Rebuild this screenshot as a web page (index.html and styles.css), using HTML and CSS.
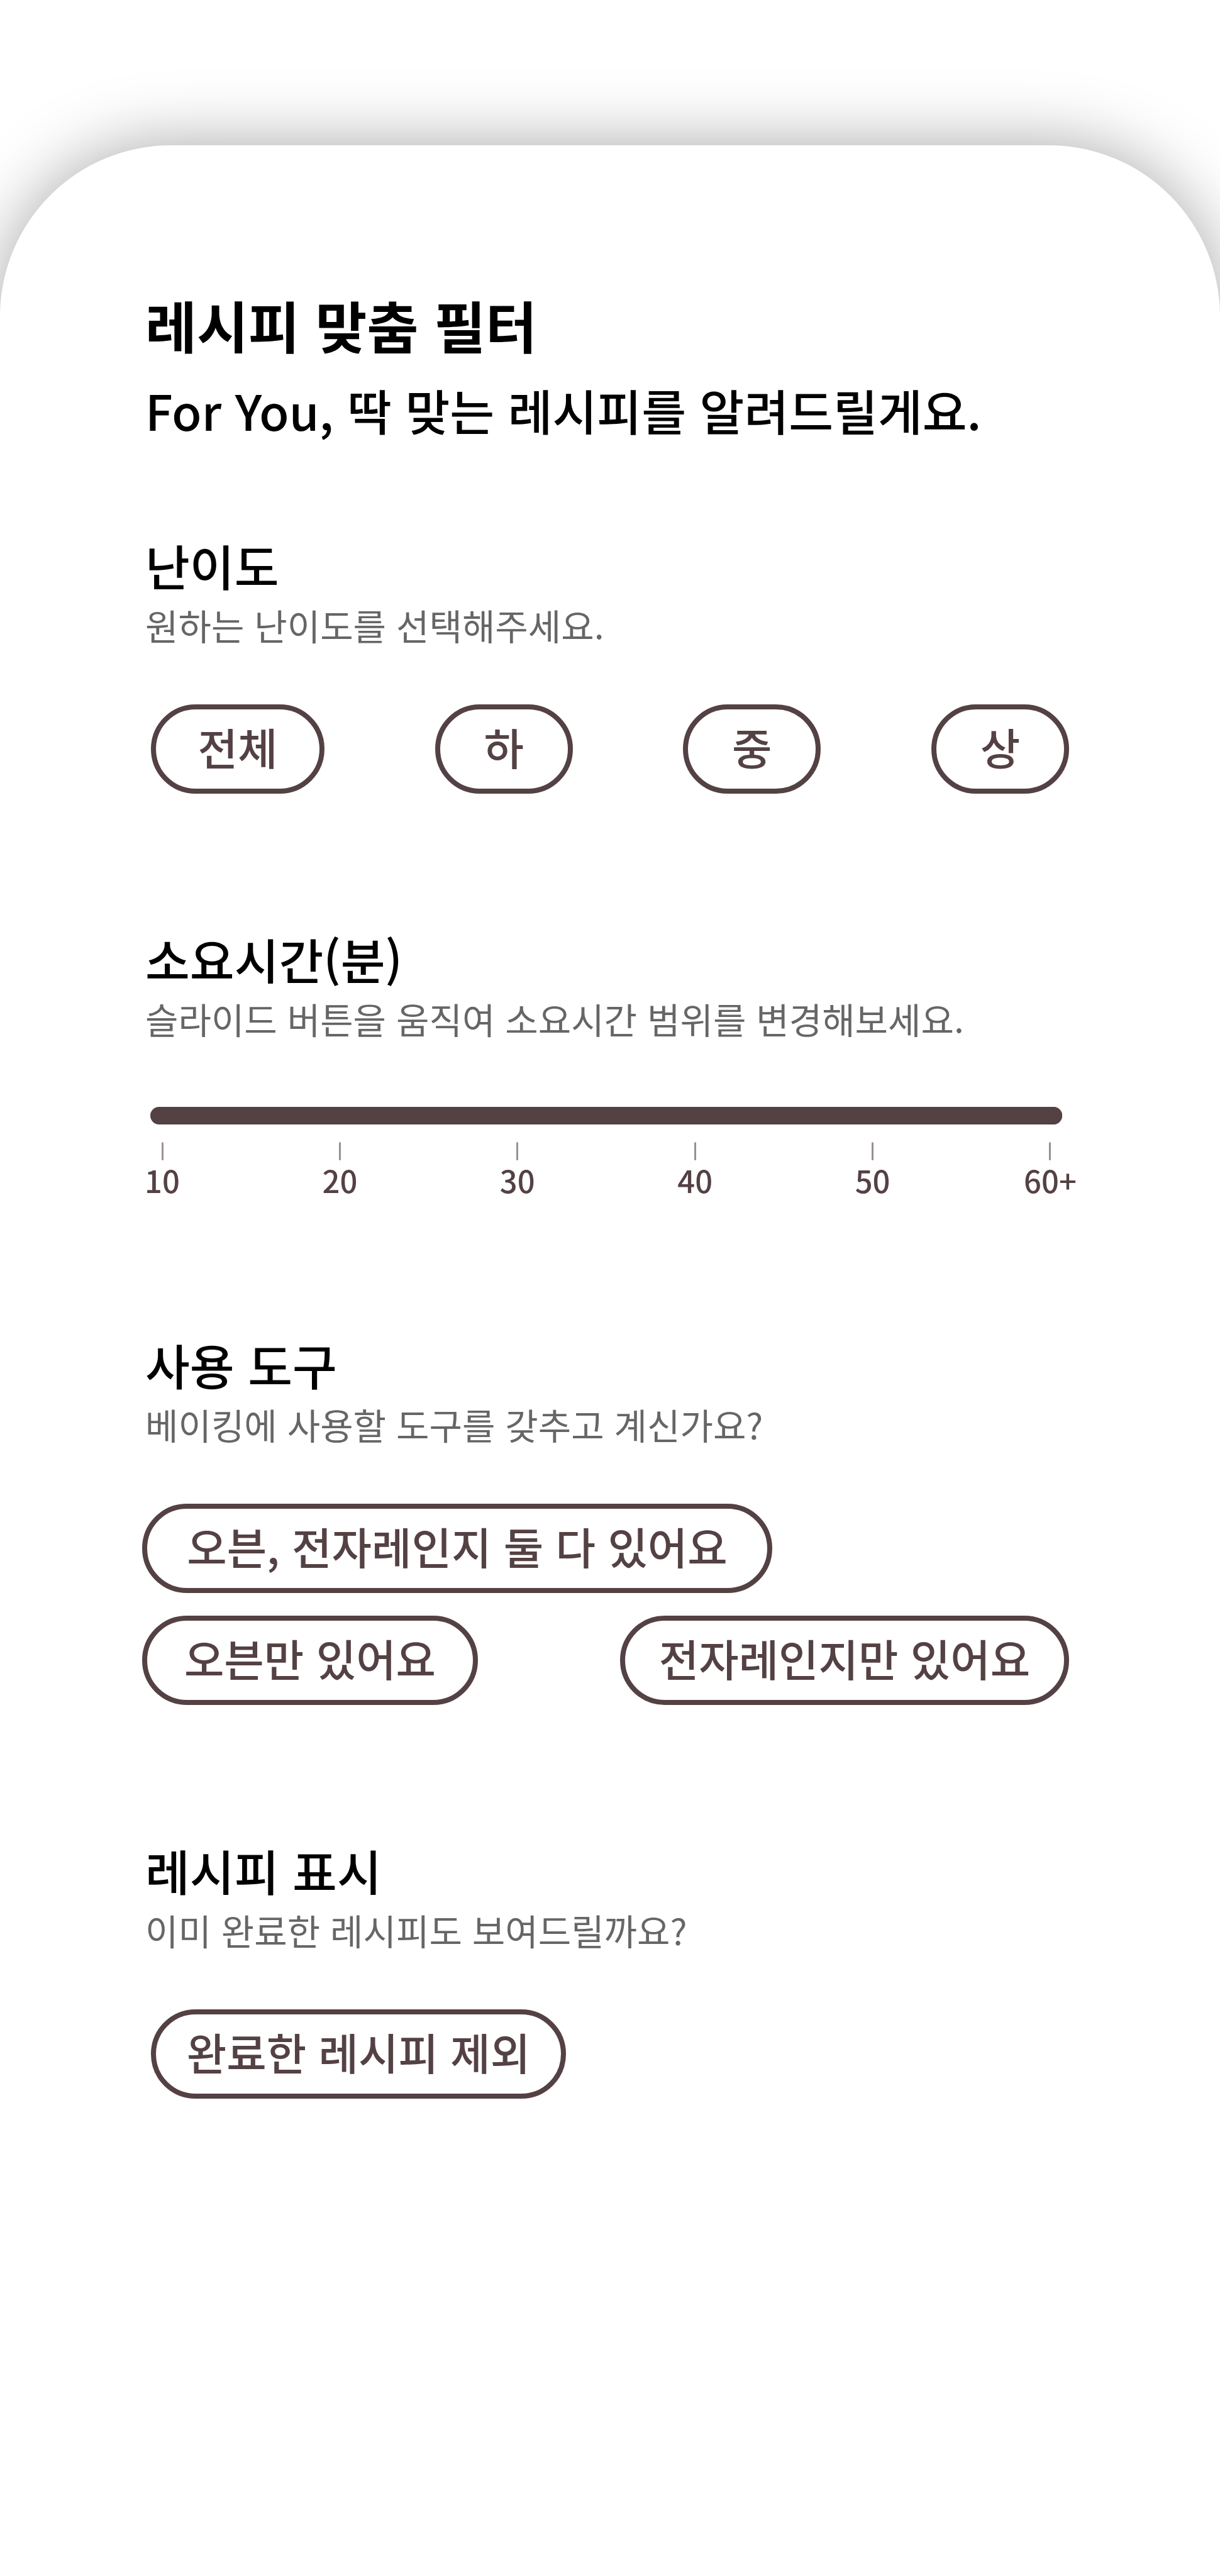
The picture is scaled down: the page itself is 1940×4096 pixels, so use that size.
FILE: index.html
```html
<!DOCTYPE html>
<html lang="ko">
<head>
<meta charset="utf-8">
<meta name="viewport" content="width=device-width, initial-scale=1">
<title>레시피 맞춤 필터</title>
<link rel="stylesheet" href="styles.css">
</head>
<body>
<main class="sheet">
  <header class="intro">
    <h1 class="intro-title">레시피 맞춤 필터</h1>
    <p class="intro-text">For You, 딱 맞는 레시피를 알려드릴게요.</p>
  </header>

  <section class="group">
    <h2 class="group-title">난이도</h2>
    <p class="group-text">원하는 난이도를 선택해주세요.</p>
    <div class="chips chips-inset">
      <button type="button" class="chip chip-medium">전체</button>
      <button type="button" class="chip chip-small">하</button>
      <button type="button" class="chip chip-small">중</button>
      <button type="button" class="chip chip-small">상</button>
    </div>
  </section>

  <section class="group">
    <h2 class="group-title"><label for="time">소요시간(분)</label></h2>
    <p class="group-text">슬라이드 버튼을 움직여 소요시간 범위를 변경해보세요.</p>
    <input class="slider" id="time" type="range" min="10" max="60" step="10" value="60">
    <ul class="scale">
      <li class="scale-mark">10</li>
      <li class="scale-mark">20</li>
      <li class="scale-mark">30</li>
      <li class="scale-mark">40</li>
      <li class="scale-mark">50</li>
      <li class="scale-mark">60+</li>
    </ul>
  </section>

  <section class="group">
    <h2 class="group-title">사용 도구</h2>
    <p class="group-text">베이킹에 사용할 도구를 갖추고 계신가요?</p>
    <div class="chips">
      <button type="button" class="chip chip-widest">오븐, 전자레인지 둘 다 있어요</button>
      <button type="button" class="chip chip-large">오븐만 있어요</button>
      <button type="button" class="chip chip-wider">전자레인지만 있어요</button>
    </div>
  </section>

  <section class="group">
    <h2 class="group-title">레시피 표시</h2>
    <p class="group-text">이미 완료한 레시피도 보여드릴까요?</p>
    <div class="chips chips-inset">
      <button type="button" class="chip chip-wide">완료한 레시피 제외</button>
    </div>
  </section>
</main>
</body>
</html>
```
FILE: styles.css
```css
* {
  box-sizing: border-box;
}

body {
  margin: 0;
  padding-top: 231px;
  min-height: 100vh;
  display: flex;
  flex-direction: column;
  overflow-x: hidden;
  background: #fff;
  color: #000;
  font-family: "Noto Sans CJK KR", "Noto Sans", sans-serif;
  font-kerning: normal;
  text-rendering: optimizeLegibility;
}

h1,
h2,
p,
ul {
  margin: 0;
  padding: 0;
}

.sheet {
  flex: 1;
  display: flex;
  flex-direction: column;
  gap: 213px;
  padding: 225px 240px 120px 226px;
  border-radius: 272px 272px 0 0;
  background: #fff;
  box-shadow: 0 0 108px rgba(0, 0, 0, 0.35);
}

.intro {
  display: flex;
  flex-direction: column;
  gap: 24px;
  padding-left: 5px;
  margin-bottom: -68px;
}

.intro-title {
  font-size: 89px;
  line-height: 120px;
  font-weight: 700;
}

.intro-text {
  font-size: 77px;
  line-height: 104px;
  font-weight: 500;
}

.group {
  display: flex;
  flex-direction: column;
}

.group-title {
  padding-left: 5px;
  font-size: 77px;
  line-height: 100px;
  font-weight: 500;
}

.group-text {
  padding-left: 5px;
  font-size: 57px;
  line-height: 88px;
  color: #666;
}

.chips {
  display: flex;
  flex-wrap: wrap;
  justify-content: space-between;
  row-gap: 36px;
  margin-top: 83px;
}

.chips-inset {
  padding-left: 14px;
}

.chip {
  height: 142px;
  padding: 0 0 8px;
  border: 8px solid #544144;
  border-radius: 71px;
  background: #fff;
  color: #544144;
  font-family: inherit;
  font-size: 69px;
  line-height: 100px;
  font-weight: 500;
  font-kerning: inherit;
  text-rendering: inherit;
  white-space: nowrap;
}

.chip-small {
  width: 219px;
}

.chip-medium {
  width: 276px;
}

.chip-large {
  width: 534px;
}

.chip-wide {
  width: 660px;
}

.chip-wider {
  width: 714px;
}

.chip-widest {
  width: 1002px;
  margin-right: 100px;
}

.slider {
  appearance: none;
  height: 28px;
  margin: 97px 11px 0 13px;
  border-radius: 14px;
  background: #544144;
}

.slider::-webkit-slider-thumb {
  appearance: none;
  width: 28px;
  height: 28px;
  border-radius: 50%;
  background: #544144;
}

.scale {
  display: flex;
  justify-content: space-between;
  margin-top: 28px;
  padding-left: 2px;
  list-style: none;
}

.scale-mark {
  display: flex;
  flex-direction: column;
  align-items: center;
  width: 60px;
  color: #544144;
  font-size: 49px;
  line-height: 62px;
  font-weight: 500;
}

.scale-mark::before {
  content: "";
  width: 3px;
  height: 29px;
  border-radius: 2px;
  background: #9b8e91;
}
```
